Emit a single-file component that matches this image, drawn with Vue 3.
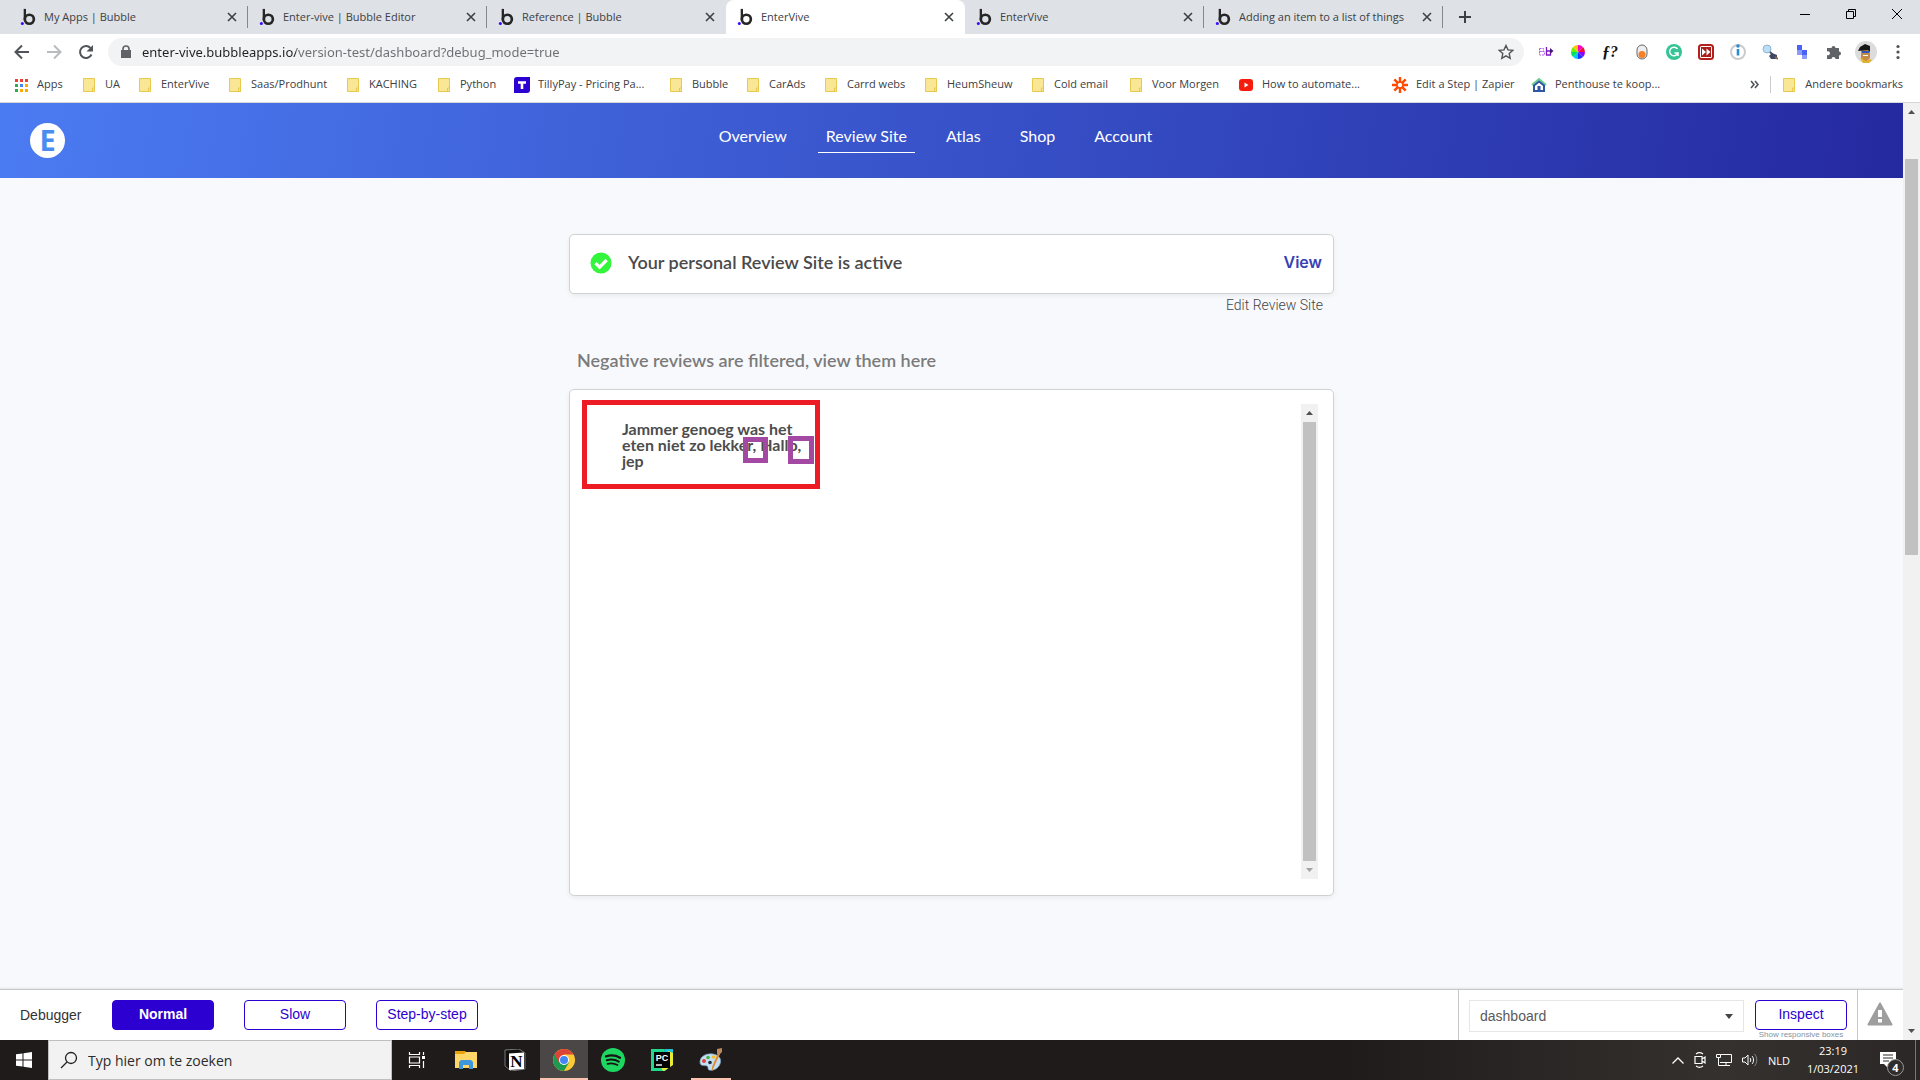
<template>
  <div class="screen">
    <div class="tabs">
      <div v-for="(tab, i) in tabs" :key="i" class="tab" :class="{ active: i === 3, divided: i !== 2 && i !== 3 }">
        <svg class="favicon" viewBox="0 0 16 20">
          <circle cx="9.500" cy="12.500" r="5" fill="none" stroke="#262626" stroke-width="3" />
          <path d="M4.500 1v12" stroke="#262626" stroke-width="2.600" />
          <circle cx="1.700" cy="17.300" r="1.700" fill="#3d0aff" />
        </svg>
        <span class="tab-title">{{ tab }}</span>
        <button class="tab-close" aria-label="Close tab">
          <svg width="10" height="10" viewBox="0 0 10 10"><path d="M1 1l8 8M9 1l-8 8" stroke="#3c4043" stroke-width="1.600" /></svg>
        </button>
      </div>
      <button class="new-tab" aria-label="New tab">
        <svg width="12" height="12" viewBox="0 0 12 12"><path d="M6 0v12M0 6h12" stroke="#3c4043" stroke-width="2" /></svg>
      </button>
      <div class="window-buttons">
        <button aria-label="Minimize"><svg width="12" height="12" viewBox="0 0 12 12"><path d="M1 6.500h10" stroke="#000" /></svg></button>
        <button aria-label="Restore"><svg width="12" height="12" viewBox="0 0 12 12"><path d="M1.500 3.500h7v7h-7zM3.500 3.500v-2h7v7h-2" fill="none" stroke="#000" /></svg></button>
        <button aria-label="Close"><svg width="12" height="12" viewBox="0 0 12 12"><path d="M1 1l10 10M11 1L1 11" stroke="#000" /></svg></button>
      </div>
    </div>

    <div class="toolbar">
      <button class="tool" aria-label="Back"><svg width="16" height="16" viewBox="0 0 16 16"><path d="M15 8H2M8 1.500L1.500 8L8 14.500" fill="none" stroke="#505357" stroke-width="2" /></svg></button>
      <button class="tool" aria-label="Forward"><svg width="16" height="16" viewBox="0 0 16 16"><path d="M1 8h13M8 1.500L14.500 8L8 14.500" fill="none" stroke="#b9bbbe" stroke-width="2" /></svg></button>
      <button class="tool" aria-label="Reload"><svg width="16" height="16" viewBox="0 0 16 16"><path d="M13.500 10.500A6 6 0 1 1 12.500 4" fill="none" stroke="#505357" stroke-width="2" /><path d="M15 1v6.500H8.500z" fill="#505357" /></svg></button>
      <div class="omnibox">
        <svg width="12" height="14" viewBox="0 0 12 14"><path d="M1 5h10v8H1z" fill="#5f6368" /><path d="M3 5.500V4a3 3 0 0 1 6 0v1.500" fill="none" stroke="#5f6368" stroke-width="1.600" /></svg>
        <input class="url" aria-label="Address" value="enter-vive.bubbleapps.io/version-test/dashboard?debug_mode=true" />
        <button class="star" aria-label="Bookmark this page"><svg width="16" height="16" viewBox="0 0 16 16"><path d="M8 1.500l2 4.400 4.700.500-3.500 3.200 1 4.700L8 11.900l-4.200 2.400 1-4.700L1.300 6.400 6 5.900z" fill="none" stroke="#505357" stroke-width="1.400" /></svg></button>
      </div>
      <div class="extensions">
        <svg viewBox="0 0 16 16"><path d="M1.500 4.500h4v3h-4zM1.500 7.500h5v3.500h-5z" fill="none" stroke="#b45ae8" stroke-dasharray="2 1" /><path d="M8.500 3v8h4V7h-4" fill="none" stroke="#7a18c8" stroke-width="1.300" /><path d="M12 4l3.500 3L12 10z" fill="#4b1580" /></svg>
        <svg viewBox="0 0 16 16">
          <path d="M8 8V1a7 7 0 0 1 5 2z" fill="#ff00c8" /><path d="M8 8l5-5a7 7 0 0 1 2 5z" fill="#f01040" />
          <path d="M8 8h7a7 7 0 0 1-2 5z" fill="#9000ff" /><path d="M8 8l5 5a7 7 0 0 1-5 2z" fill="#2030ff" />
          <path d="M8 8v7a7 7 0 0 1-5-2z" fill="#00c8ff" /><path d="M8 8l-5 5a7 7 0 0 1-2-5z" fill="#00e060" />
          <path d="M8 8H1a7 7 0 0 1 2-5z" fill="#70f000" /><path d="M8 8L3 3a7 7 0 0 1 5-2z" fill="#ffc400" />
        </svg>
        <span class="formula">ƒ?</span>
        <svg viewBox="0 0 16 16"><rect x="3" y="1" width="10" height="14" rx="5" fill="#eee" stroke="#666" /><circle cx="8" cy="10.500" r="3.500" fill="#f58025" /></svg>
        <svg viewBox="0 0 16 16"><circle cx="8" cy="8" r="8" fill="#35c496" /><path d="M11.500 5A4.300 4.300 0 1 0 12 9H8.500M12 9v3" fill="none" stroke="#fff" stroke-width="1.500" /></svg>
        <svg viewBox="0 0 16 16"><rect x="1" y="1" width="14" height="14" rx="2.500" fill="#fff" stroke="#b3201b" stroke-width="2" /><rect x="3" y="3" width="10" height="10" fill="#a81d18" /><path d="M4 4.500L8 8l-4 3.500zM8.500 4.500L12.500 8l-4 3.500z" fill="#fff" /></svg>
        <svg viewBox="0 0 16 16"><circle cx="8" cy="8" r="7" fill="#fff" stroke="#ccc" stroke-width="2" /><path d="M8 5v6.500" stroke="#2f8bd0" stroke-width="2.600" /><circle cx="8" cy="2" r="1.800" fill="#2f8bd0" /></svg>
        <svg viewBox="0 0 16 16"><circle cx="5" cy="5" r="4" fill="#b9dff8" stroke="#93b4d0" /><path d="M8 8l3 3" stroke="#555" stroke-width="2" /><path d="M7 12l3-3 5 2v4H9z" fill="#3f4863" /><path d="M13 13l3 2" stroke="#8c6b3f" stroke-width="2" /></svg>
        <svg viewBox="0 0 16 16"><path d="M3 1h5v5H3z" fill="#4b62f5" /><path d="M3 6h5v5H3z" fill="#8c9bf8" /><path d="M8 6h5v5H8z" fill="#4b62f5" /><path d="M8 11h5v4H8z" fill="#8c9bf8" /></svg>
        <svg viewBox="0 0 16 16"><path d="M1 4h4.500a2 2 0 1 1 4 0H13v3.500a2 2 0 1 1 0 4V15H9.500a2 2 0 1 0-4 0H1v-4a2 2 0 1 0 0-3.500z" fill="#5f6368" /></svg>
        <svg class="avatar" viewBox="0 0 22 22"><circle cx="11" cy="11" r="11" fill="#dcdcdc" /><path d="M6 9h9v8l-3 3H8l-2-3z" fill="#c58a45" /><path d="M3 10l2-4 5-3 5 2v6l-2-2z" fill="#171717" /><path d="M7 10h7v2H7z" fill="#2d56b8" /><path d="M8 14h5v1H8z" fill="#fff" /><path d="M5 17l3 1 3 2 4-2 2 1-3 3H8z" fill="#e2b12d" /></svg>
        <svg viewBox="0 0 16 16"><g fill="#505357"><circle cx="8" cy="2.500" r="1.600" /><circle cx="8" cy="8" r="1.600" /><circle cx="8" cy="13.500" r="1.600" /></g></svg>
      </div>
    </div>

    <div class="bookmarks">
      <a v-for="mark in bookmarks" :key="mark.name" href="#" class="bookmark" :style="{ width: mark.width + 'px' }">
        <svg v-if="mark.icon === 'apps'" viewBox="0 0 16 16">
          <path d="M2 2h3v3H2zM7 2h3v3H7zM12 2h3v3h-3z" fill="#ea4335" />
          <path d="M2 7h3v3H2zM2 12h3v3H2z" fill="#34a853" />
          <path d="M7 7h3v3H7z" fill="#4285f4" />
          <path d="M12 7h3v3h-3zM7 12h3v3H7zM12 12h3v3h-3z" fill="#f9ab00" />
        </svg>
        <svg v-else-if="mark.icon === 'tilly'" viewBox="0 0 16 16"><path d="M3 0h13v13a3 3 0 0 1-3 3H0V3a3 3 0 0 1 3-3z" fill="#2d00d2" /><path d="M4 5.500h8M8 5v7" stroke="#fff" stroke-width="2.600" /></svg>
        <svg v-else-if="mark.icon === 'youtube'" viewBox="0 0 16 16"><rect x="1" y="2" width="14" height="12" rx="3" fill="#f61c0d" /><path d="M6.500 5.500v5l4-2.500z" fill="#fff" /></svg>
        <svg v-else-if="mark.icon === 'zapier'" viewBox="0 0 16 16"><path d="M8 0v5.500M8 10.500V16M0 8h5.500M10.500 8H16M2.300 2.300l4 4M9.700 9.700l4 4M13.700 2.300l-4 4M6.300 9.700l-4 4" stroke="#ff4a00" stroke-width="2.400" /><circle cx="8" cy="8" r="3" fill="none" stroke="#ff4a00" stroke-width="1.400" /></svg>
        <svg v-else-if="mark.icon === 'house'" viewBox="0 0 16 16"><path d="M1 8l7-6 7 6" fill="none" stroke="#6bd08a" stroke-width="2" /><path d="M3 8.500l5-4 5 4V14H3z" fill="#fff" stroke="#2f55a5" stroke-width="2" /><path d="M6.500 9h3v5h-3z" fill="#2f55a5" /></svg>
        <svg v-else viewBox="0 0 16 16"><path d="M2.500 1.500h11v13h-11z" fill="#f9e795" stroke="#e6c94e" /><path d="M11.500 11h2v3.500h-2z" fill="#f9e795" stroke="#e6c94e" /></svg>
        <span>{{ mark.name }}</span>
      </a>
      <button class="overflow" aria-label="More bookmarks"><svg width="9" height="9" viewBox="0 0 9 9"><path d="M1 1l3 3.500L1 8M5 1l3 3.500L5 8" fill="none" stroke="#505357" stroke-width="1.600" /></svg></button>
      <a href="#" class="bookmark other">
        <svg viewBox="0 0 16 16"><path d="M2.500 1.500h11v13h-11z" fill="#f9e795" stroke="#e6c94e" /><path d="M11.500 11h2v3.500h-2z" fill="#f9e795" stroke="#e6c94e" /></svg>
        <span>Andere bookmarks</span>
      </a>
    </div>

    <div class="viewport">
      <div class="page">
        <header class="header">
          <a href="#" class="logo" aria-label="EnterVive">E</a>
          <nav>
            <a v-for="link in links" :key="link" href="#" :class="{ current: link === 'Review Site' }">{{ link }}</a>
          </nav>
        </header>

        <main>
          <section class="card status">
            <svg width="22" height="22" viewBox="0 0 22 22"><circle cx="11" cy="11" r="10.500" fill="#33f53c" /><path d="M5.500 11.200l4 4 7.200-7.200" fill="none" stroke="#fff" stroke-width="3.200" /></svg>
            <h1>Your personal Review Site is active</h1>
            <a href="#" class="view">View</a>
          </section>
          <a href="#" class="edit">Edit Review Site</a>
          <h2>Negative reviews are filtered, view them here</h2>
          <section class="card reviews">
            <div class="review">
              <p>Jammer genoeg was het eten niet zo lekker, Hallo, jep</p>
              <i class="mark mark-first"></i>
              <i class="mark mark-second"></i>
            </div>
            <div class="scrollbar inner">
              <svg width="7" height="4" viewBox="0 0 7 4"><path d="M0 4h7L3.500 0z" fill="#505050" /></svg>
              <div class="thumb"></div>
              <svg width="7" height="4" viewBox="0 0 7 4"><path d="M0 0h7L3.500 4z" fill="#a3a3a3" /></svg>
            </div>
          </section>
        </main>

        <footer class="debugger">
          <span class="debugger-label">Debugger</span>
          <div class="speeds">
            <button class="chosen">Normal</button>
            <button>Slow</button>
            <button>Step-by-step</button>
          </div>
          <div class="inspector">
            <div class="picker">
              <select aria-label="Element">
                <option>dashboard</option>
              </select>
              <svg width="8" height="5" viewBox="0 0 8 5"><path d="M0 0h8L4 5z" fill="#444" /></svg>
            </div>
            <div class="inspect">
              <button>Inspect</button>
              <small>Show responsive boxes</small>
            </div>
          </div>
          <div class="issues">
            <svg width="26" height="24" viewBox="0 0 26 24"><path d="M13 1.500L24.500 22.500h-23z" fill="#9e9e9e" stroke="#9e9e9e" stroke-width="2" stroke-linejoin="round" /><path d="M13 8v7M13 17v3.500" stroke="#fff" stroke-width="4" /></svg>
          </div>
        </footer>
      </div>
      <div class="scrollbar outer">
        <svg width="7" height="4" viewBox="0 0 7 4"><path d="M0 4h7L3.500 0z" fill="#505050" /></svg>
        <div class="track"><div class="thumb"></div></div>
        <svg width="7" height="4" viewBox="0 0 7 4"><path d="M0 0h7L3.500 4z" fill="#505050" /></svg>
      </div>
    </div>

    <div class="taskbar">
      <button class="start" aria-label="Start"><svg width="16" height="16" viewBox="0 0 16 16"><path d="M0 2.300l6.500-.900v6.100H0zM7.500 1.200L16 0v7.500H7.500zM0 8.500h6.500v6.100L0 13.700zM7.500 8.500H16V16l-8.500-1.200z" fill="#fff" /></svg></button>
      <label class="search">
        <svg width="18" height="18" viewBox="0 0 18 18"><circle cx="11" cy="7" r="5.500" fill="none" stroke="#222" stroke-width="1.300" /><path d="M7 11l-6 6" stroke="#222" stroke-width="1.300" /></svg>
        <input aria-label="Zoeken" placeholder="Typ hier om te zoeken" />
      </label>
      <div class="apps">
        <button aria-label="Task view"><svg width="18" height="16" viewBox="0 0 18 16"><path d="M1.500 0v2.500h10V0M1.500 16v-2.500h10V16M1.500 5h10v6h-10zM15.500 0v3M15.500 9v7" fill="none" stroke="#fff" stroke-width="1.200" /><path d="M14 4h3v3h-3z" fill="#fff" /></svg></button>
        <button aria-label="Explorer"><svg width="22" height="20" viewBox="0 0 22 20"><path d="M0 1h10l2 2v3H0z" fill="#e8a20c" /><path d="M0 4h9l2-2h11v16H0z" fill="#ffd768" /><path d="M4 19v-7l2-2h10l2 2v7h-4v-4H8v4z" fill="#3d97dd" /></svg></button>
        <button aria-label="Notion"><svg width="22" height="22" viewBox="0 0 22 22"><path d="M1 1l14-1 6 4v16l-14 2-6-5z" fill="#111" stroke="#777" /><path d="M5 4.500l15-1V20L5 21z" fill="#fff" /><text x="12.500" y="18" text-anchor="middle" class="notion-letter">N</text></svg></button>
        <button class="running focused" aria-label="Chrome"><svg width="22" height="22" viewBox="0 0 22 22"><circle cx="11" cy="11" r="11" fill="#fcc934" /><path d="M11 11L1.500 5.500A11 11 0 0 0 11 22l5-8.500z" fill="#1e9a50" /><path d="M1.500 5.500a11 11 0 0 1 19 0H11v5.500l-5 2.500z" fill="#dc4437" /><circle cx="11" cy="11" r="5" fill="#fff" /><circle cx="11" cy="11" r="4" fill="#4285f4" /></svg></button>
        <button aria-label="Spotify"><svg width="24" height="24" viewBox="0 0 24 24"><circle cx="12" cy="12" r="12" fill="#1ed760" /><g fill="none" stroke="#171515" stroke-linecap="round"><path d="M5 8.300c5-1.500 10-1 14 1.400" stroke-width="2.400" /><path d="M5.800 12.300c4-1.200 8.500-.700 12 1.300" stroke-width="2" /><path d="M6.500 15.900c3.500-1 7-.600 10 1.100" stroke-width="1.700" /></g></svg></button>
        <button aria-label="PyCharm"><svg width="22" height="22" viewBox="0 0 22 22"><path d="M0 0h14l-8 22H0z" fill="#21d789" /><path d="M14 0h8v15l-8 7H5z" fill="#20c4d8" /><path d="M22 4v12l-9 6H3l14-9V2z" fill="#e9ee35" /><path d="M0 15v7h12l-4-7z" fill="#21d789" /><path d="M3 3h16v16H3z" fill="#000" /><text x="11" y="11.500" text-anchor="middle" class="pycharm-letters">PC</text><path d="M5 16h6" stroke="#fff" stroke-width="1.400" /></svg></button>
        <button class="running" aria-label="Paint"><svg width="24" height="24" viewBox="0 0 24 24"><path d="M1 14C1 8 8 5 14 6s9 5 7 10-7 7-11 6c-2-1 0-3-2-4s-7 1-7-4z" fill="#c3dff0" stroke="#7aa7c4" stroke-width=".700" /><circle cx="5" cy="13" r="2" fill="#e04438" /><circle cx="9" cy="9.500" r="1.800" fill="#45b04a" /><circle cx="14.500" cy="9" r="1.800" fill="#f0c02c" /><circle cx="11" cy="14.500" r="1.800" fill="#1f2d3a" /><path d="M19 5l2 1-7 15-1 2v-4z" fill="#e08b31" /><path d="M18 1l5-1v4l-3 3-2-1z" fill="#b98a5e" /></svg></button>
      </div>
      <div class="tray">
        <svg width="12" height="7" viewBox="0 0 12 7"><path d="M.500 6.500L6 1l5.500 5.500" fill="none" stroke="#fff" stroke-width="1.300" /></svg>
        <svg width="12" height="16" viewBox="0 0 12 16"><path d="M1 4.500h7v7H1zM8 7l3-2v6L8 9M2 2c2-1.500 5-1.500 7 0M2 14c2 1.500 5 1.500 7 0" fill="none" stroke="#fff" stroke-width="1.200" /></svg>
        <svg width="16" height="14" viewBox="0 0 16 14"><path d="M4.500 1.500h11v8H4M10 9.500v3M6 12.500h8M.500 1.500h4v3h-4zM2.500 4.500v8H6" fill="none" stroke="#fff" /></svg>
        <svg width="16" height="14" viewBox="0 0 16 14"><path d="M.500 5h2.500l3-3v10L3 9H.500zM8 5c1 1 1 3 0 4M10 3c2 2 2 6 0 8" fill="none" stroke="#fff" /><path d="M12.500 1c3 3 3 9 0 12" fill="none" stroke="#888" /></svg>
        <span>NLD</span>
        <time class="clock">23:19<br />1/03/2021</time>
        <button class="notifications" aria-label="Notifications">
          <svg width="16" height="16" viewBox="0 0 16 16"><path d="M0 0h16v12H8v4l-4-4H0z" fill="#fff" /><path d="M3 3h10M3 6h10M3 9h6" stroke="#2b2827" /></svg>
          <span class="count">4</span>
        </button>
      </div>
    </div>
  </div>
</template>

<script setup>
const tabs = [
  'My Apps | Bubble',
  'Enter-vive | Bubble Editor',
  'Reference | Bubble',
  'EnterVive',
  'EnterVive',
  'Adding an item to a list of things',
]

const bookmarks = [
  { name: 'Apps', icon: 'apps', width: 52 },
  { name: 'UA', width: 40 },
  { name: 'EnterVive', width: 74 },
  { name: 'Saas/Prodhunt', width: 102 },
  { name: 'KACHING', width: 75 },
  { name: 'Python', width: 62 },
  { name: 'TillyPay - Pricing Pa...', icon: 'tilly', width: 138 },
  { name: 'Bubble', width: 61 },
  { name: 'CarAds', width: 62 },
  { name: 'Carrd webs', width: 84 },
  { name: 'HeumSheuw', width: 91 },
  { name: 'Cold email', width: 82 },
  { name: 'Voor Morgen', width: 94 },
  { name: 'How to automate...', icon: 'youtube', width: 138 },
  { name: 'Edit a Step | Zapier', icon: 'zapier', width: 123 },
  { name: 'Penthouse te koop...', icon: 'house', width: 138 },
]

const links = ['Overview', 'Review Site', 'Atlas', 'Shop', 'Account']
</script>

<style>
body {
  margin: 0;
}
</style>

<style scoped>
.screen {
  min-height: 100vh;
  display: flex;
  flex-direction: column;
  font-family: 'Open Sans', 'Liberation Sans', sans-serif;
  font-size: 11px;
  color: #3c4043;
}
.screen * {
  box-sizing: border-box;
}
button {
  padding: 0;
  border: none;
  background: none;
  font: inherit;
  color: inherit;
}
a {
  color: inherit;
  text-decoration: none;
}
svg {
  display: block;
  flex: none;
}
.tabs {
  display: flex;
  height: 34px;
  padding-left: 9px;
  background: #dee1e6;
}
.tab {
  width: 239px;
  display: flex;
  align-items: center;
  padding: 0 7px 0 11px;
  border-right: 1px solid transparent;
}
.tab.divided {
  border-image: linear-gradient(transparent 7px, #85888c 7px, #85888c 27px, transparent 27px) 1;
}
.tab.active {
  background: #fff;
  border-radius: 8px 8px 0 0;
}
.favicon {
  width: 16px;
  height: 18px;
}
.tab-title {
  flex: 1;
  margin-left: 8px;
  padding-bottom: 2px;
  white-space: nowrap;
  overflow: hidden;
}
.tab-close {
  width: 16px;
  margin-left: 6px;
  display: grid;
  place-items: center;
}
.new-tab {
  width: 44px;
  display: grid;
  place-items: center;
}
.window-buttons {
  margin-left: auto;
  display: flex;
  height: 28px;
}
.window-buttons button {
  width: 46px;
  display: grid;
  place-items: center;
}
.toolbar {
  display: flex;
  align-items: center;
  height: 36px;
  padding-left: 6px;
  background: #fff;
}
.tool {
  width: 32px;
  display: grid;
  place-items: center;
}
.omnibox {
  flex: 1;
  display: flex;
  align-items: center;
  height: 28px;
  margin-left: 6px;
  padding: 0 10px 0 12px;
  border-radius: 14px;
  background: #f1f3f4;
}
.url {
  flex: 1;
  margin-left: 10px;
  padding: 0;
  border: none;
  font: 13px 'Noto Sans', sans-serif;
  color: transparent;
  /* host in black, path in grey */
  background: linear-gradient(90deg, #202124 154px, #6b6e73 154px) text;
}
.extensions {
  display: flex;
  gap: 16px;
  align-items: center;
  padding: 0 14px;
}
.extensions svg,
.formula {
  width: 16px;
  height: 16px;
}
.extensions .avatar {
  width: 22px;
  height: 22px;
  margin: 0 -3px;
}
.formula {
  font: italic bold 16px/16px 'Liberation Serif', serif;
  color: #111;
}
.bookmarks {
  display: flex;
  gap: 16px;
  align-items: center;
  height: 33px;
  padding: 0 17px 3px 13px;
  border-bottom: 1px solid #d5d7db;
  background: #fff;
}
.bookmark {
  display: flex;
  gap: 8px;
  align-items: center;
  white-space: nowrap;
}
.bookmark span {
  padding-bottom: 2px;
}
.bookmark svg {
  width: 16px;
  height: 16px;
}
.overflow {
  margin-left: auto;
}
.other {
  margin-left: -5px;
  padding-left: 10px;
  border-left: 1px solid #c9cbce;
}
.viewport {
  flex: 1;
  display: flex;
}
.page {
  flex: 1;
  display: flex;
  flex-direction: column;
  background: #f8f9fd;
  font-family: Lato, 'Liberation Sans', sans-serif;
}
.header {
  display: grid;
  grid-template-columns: 1fr auto 1fr;
  height: 75px;
  padding: 20px 32px 0 0;
  background: linear-gradient(100deg, #4b7bf2, #2529a0);
}
.logo {
  width: 35px;
  height: 35px;
  margin-left: 30px;
  border-radius: 50%;
  background: #fff;
  color: #4a8df0;
  font: bold 29px/34px 'Open Sans', sans-serif;
  text-align: center;
}
nav {
  display: flex;
  gap: 23px;
}
nav a {
  height: 30px;
  padding: 0 8px;
  border-bottom: 1px solid transparent;
  color: #fff;
  font-size: 16px;
  line-height: 26px;
}
nav a.current {
  border-color: #fff;
}
main {
  flex: 1;
  width: 100%;
  max-width: 765px;
  margin: 0 auto;
  padding: 56px 0 93px;
  display: flex;
  flex-direction: column;
}
.card {
  border: 1px solid #cfd1d2;
  border-radius: 5px;
  background: #fff;
  box-shadow: 0 2px 5px rgba(0, 0, 0, 0.06);
}
.status {
  display: flex;
  align-items: center;
  height: 60px;
  padding: 0 11px 2px 20px;
}
h1 {
  flex: 1;
  margin: 0 0 0 16px;
  padding-bottom: 2px;
  font-size: 18px;
  font-weight: 600;
  color: #4a4a4a;
}
.view {
  padding-bottom: 2px;
  font: 600 16px Inter, sans-serif;
  color: #3842b4;
}
.edit {
  align-self: flex-end;
  margin: 2px 11px 0 0;
  font: 300 14px/18px Roboto, sans-serif;
  color: #444;
}
h2 {
  margin: 35px 0 18px 8px;
  font-size: 18px;
  line-height: 22px;
  font-weight: 600;
  color: #7b7b7b;
}
.reviews {
  flex: 1;
  display: flex;
  justify-content: space-between;
  align-items: flex-start;
  padding: 10px 15px 16px 12px;
}
.review {
  position: relative;
  width: 238px;
  height: 89px;
  padding: 16px 0 0 35px;
  border: 5px solid #ed1c24;
}
.review p {
  width: 184px;
  margin: 0;
  font-size: 16px;
  line-height: 16px;
  font-weight: bold;
  color: #4d4d4d;
}
.mark {
  position: absolute;
  border: 5px solid #a349a4;
}
.mark-first {
  left: 156px;
  top: 32px;
  width: 25px;
  height: 26px;
}
.mark-second {
  left: 201px;
  top: 31px;
  width: 26px;
  height: 28px;
}
.scrollbar {
  width: 17px;
  display: flex;
  flex-direction: column;
  align-items: center;
  gap: 10px;
  background: #f1f1f1;
}
.inner {
  align-self: stretch;
  gap: 7px;
  margin-top: 4px;
  padding: 7px 0;
}
.inner .thumb {
  flex: 1;
  width: 13px;
  background: #c1c1c1;
}
.outer {
  padding: 7px 0;
}
.track {
  flex: 1;
  padding-top: 35px;
}
.track .thumb {
  width: 13px;
  height: 46%;
  background: #c1c1c1;
}
.debugger {
  display: flex;
  height: 51px;
  padding-left: 20px;
  border-top: 1px solid #c6c8c8;
  background: #fff;
  box-shadow: 0 -1px 2px rgba(0, 0, 0, 0.08);
  font: 14px 'Liberation Sans', Arial, sans-serif;
}
.debugger-label {
  width: 92px;
  line-height: 50px;
  color: #333;
}
.speeds {
  display: flex;
  gap: 30px;
  padding-top: 10px;
}
.debugger button {
  width: 102px;
  height: 30px;
  padding-bottom: 2px;
  border: 1px solid #2d00d2;
  border-radius: 4px;
  background: #fff;
  color: #2d00d2;
}
.debugger button.chosen {
  background: #2d00d2;
  color: #fff;
  font-weight: bold;
}
.inspector {
  margin-left: auto;
  display: flex;
  gap: 11px;
  padding: 10px 10px 0 10px;
  border-left: 1px solid #c6c8c8;
}
.picker {
  width: 275px;
  height: 32px;
  display: flex;
  align-items: center;
  padding-right: 10px;
  border: 1px solid #e6e6e6;
}
select {
  flex: 1;
  appearance: none;
  padding: 0 0 0 10px;
  border: none;
  background: none;
  font: 14px 'Liberation Sans', Arial, sans-serif;
  color: #5a5a5a;
}
.inspect {
  display: flex;
  flex-direction: column;
  align-items: center;
}
.debugger .inspect button {
  width: 92px;
}
small {
  font-size: 8px;
  line-height: 9px;
  color: #8494a2;
}
.issues {
  padding: 12px 10px 0 9px;
  border-left: 1px solid #c6c8c8;
}
.taskbar {
  display: flex;
  height: 40px;
  background: linear-gradient(90deg, #1e1b1a 70%, #35312f 90%, #2a2726);
  color: #fff;
}
.start {
  width: 48px;
  display: grid;
  place-items: center;
}
.search {
  width: 344px;
  display: flex;
  align-items: center;
  gap: 10px;
  padding-left: 11px;
  border: 1px solid #bfbfbf;
  background: #f2f2f2;
}
.search input {
  flex: 1;
  padding: 0;
  border: none;
  background: none;
  font: 14px 'Open Sans', sans-serif;
}
.search input::placeholder {
  color: #2b2b2b;
}
.apps {
  display: flex;
  gap: 1px;
  padding-left: 1px;
}
.apps button {
  width: 48px;
  display: grid;
  place-items: center;
}
.apps .running {
  background: linear-gradient(#fac3b0, #fac3b0) bottom / 40px 2px no-repeat;
}
.apps .focused {
  background-color: #4b4746;
  background-size: 48px 2px;
}
.notion-letter {
  font: bold 17px 'Liberation Serif', serif;
}
.pycharm-letters {
  font: bold 9px 'Liberation Sans', sans-serif;
  fill: #fff;
}
.tray {
  margin-left: auto;
  display: flex;
  align-items: center;
  gap: 10px;
  padding-right: 4px;
}
.clock {
  width: 66px;
  line-height: 18px;
  text-align: center;
}
.notifications {
  position: relative;
  width: 40px;
  height: 40px;
  padding-left: 4px;
  display: flex;
  align-items: center;
  border-right: 1px solid #777;
}
.count {
  position: absolute;
  left: 11px;
  top: 19px;
  width: 17px;
  height: 17px;
  border: 1px solid #999;
  border-radius: 50%;
  background: #2f2c2b;
  font: bold 11px/15px 'Open Sans', sans-serif;
  text-align: center;
}
</style>
